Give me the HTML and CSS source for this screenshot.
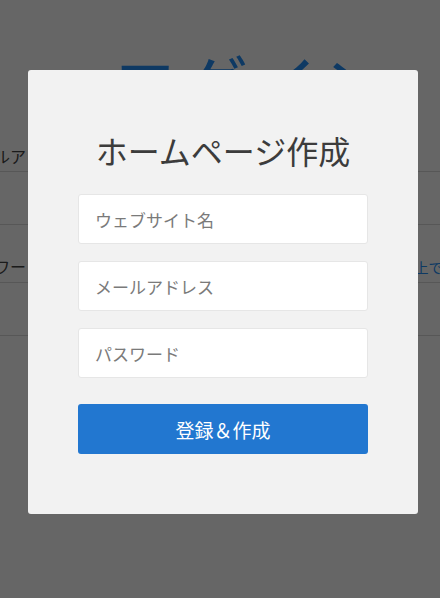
FILE: index.html
```html
<!DOCTYPE html>
<html lang="ja">
  <head>
    <meta charset="UTF-8" />
    <meta name="viewport" content="width=device-width, initial-scale=1.0" />
    <title>ログイン</title>
    <link rel="stylesheet" href="styles.css">
  </head>
  <body>
    <div class="page">
      <div class="login">
        <h1 class="login-title">ログイン</h1>

        <div class="field">
          <label class="field-label">メールアドレス</label>
          <div class="field-input"></div>
        </div>

        <div class="field">
          <label class="field-label">
            パスワード
            <span class="field-note">8文字以上です。</span>
          </label>
          <div class="field-input"></div>
        </div>
      </div>
    </div>

    <!-- modal -->
    <div class="overlay">
      <div class="modal">
        <h2 class="modal-title">ホームページ作成</h2>
        <form class="modal-form">
          <input class="modal-input" type="text" placeholder="ウェブサイト名" />
          <input class="modal-input" type="email" placeholder="メールアドレス" />
          <input class="modal-input" type="password" placeholder="パスワード" />
          <button class="modal-button" type="button">登録＆作成</button>
        </form>
      </div>
    </div>
  </body>
</html>
```

FILE: styles.css
```css
:root {
  --primary-color: #2277d0;
  --link-color: #2390f8;
  --modal-background: #f2f2f2;
  --text-color: #444;
}

* {
  margin: 0;
  padding: 0;
  box-sizing: border-box;
}

body {
  font-family: "Noto Sans CJK JP", "Noto Sans", sans-serif;
  background-color: #ffffff;
  color: var(--text-color);
  overflow: hidden;
}

/* page behind the modal */
.page {
  display: flex;
  justify-content: center;
}

.login {
  flex: 0 0 516px;
  width: 516px;
}

.login-title {
  color: var(--link-color);
  font-size: 66px;
  font-weight: 400;
  line-height: 80px;
  letter-spacing: 4px;
  text-align: center;
  margin-top: 42px;
  padding-left: 64px;
}

.field-label {
  display: flex;
  align-items: baseline;
  white-space: nowrap;
  font-size: 16px;
  line-height: 24px;
  padding-bottom: 3px;
  border-bottom: 1px solid #d9d9d9;
}

.field + .field .field-label {
  margin-top: 29px;
}

.login-title + .field .field-label {
  margin-top: 22px;
}

.field-note {
  color: var(--link-color);
  font-size: 14px;
  margin-left: auto;
  padding-right: 9px;
}

.field-input {
  height: 53px;
  border-bottom: 1px solid #d9d9d9;
}

/* modal */
.overlay {
  position: fixed;
  inset: 0;
  background-color: rgba(0, 0, 0, 0.6);
  padding: 70px 22px 0 28px;
}

.modal {
  background: var(--modal-background);
  border-radius: 3px;
  padding: 56px 50px 60px;
}

.modal-title {
  font-size: 32px;
  font-weight: 400;
  line-height: 48px;
  text-align: center;
  color: #3c3c3c;
  margin-bottom: 20px;
}

.modal-form {
  display: flex;
  flex-direction: column;
  gap: 17px;
}

.modal-input {
  height: 50px;
  background: #fff;
  border: 1px solid #e6e6e6;
  border-radius: 3px;
  padding: 0 16px;
  font-family: inherit;
  font-size: 17px;
  color: #333;
  outline: none;
}

.modal-input::placeholder {
  color: #7a7a7a;
}

.modal-button {
  height: 50px;
  margin-top: 9px;
  background: var(--primary-color);
  border: none;
  border-radius: 3px;
  color: #fff;
  font-family: inherit;
  font-size: 19px;
  cursor: pointer;
}
```
